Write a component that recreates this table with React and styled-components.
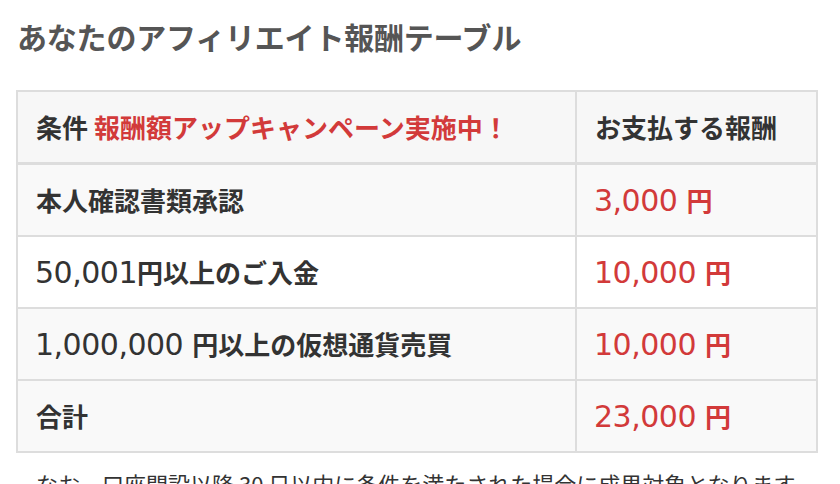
import React from 'react'
import styled, { createGlobalStyle } from 'styled-components'

const GlobalStyle = createGlobalStyle`
  html, body {
    margin: 0;
    background: #fff;
  }
  body {
    font-family: "Noto Sans CJK JP", "Noto Sans", sans-serif;
    color: #333;
  }
`

const Page = styled.main`
  padding: 15px 25px 0 16px;
  height: 484px;
  box-sizing: border-box;
  overflow: hidden;
`

const Title = styled.h2`
  margin: 0 0 33px 1px;
  font-size: 30px;
  line-height: 42px;
  font-weight: 700;
  color: #555;
  letter-spacing: -0.2px;
`

const Table = styled.table`
  width: 800px;
  border-collapse: collapse;
  border: 2px solid #ddd;
  table-layout: fixed;
`

const Row = styled.tr`
  background: ${props => (props.$striped ? '#f9f9f9' : '#fff')};
`

const HeadRow = styled.tr`
  background: #f7f7f7;
  border-bottom: 3px solid #ddd;
`

const Cell = styled.td`
  border: 2px solid #ddd;
  padding: 15px 16px 16px 18px;
  font-size: 26px;
  line-height: 39px;
  font-weight: 600;
  color: ${props => (props.$accent ? '#d23a3a' : '#333')};
  white-space: nowrap;
`

const HeadCell = styled(Cell).attrs({ as: 'th' })`
  text-align: left;
`

// latin digits in the reference are set noticeably larger and wider than the kana
const Num = styled.span`
  font-family: "DejaVu Sans", sans-serif;
  font-size: 30px;
  font-weight: 400;
  line-height: 1;
  letter-spacing: -0.5px;
  margin-left: -1px;
`

const Campaign = styled.span`
  color: #d23a3a;
  margin-left: 6px;
`

const Note = styled.p`
  margin: 14px 0 0 20px;
  font-size: 22px;
  line-height: 32px;
  color: #333;
  white-space: nowrap;
`

const withNumbers = text =>
  text.split(/([0-9][0-9,]*\s?)/).map((part, i) =>
    /^[0-9]/.test(part) ? <Num key={i}>{part}</Num> : part
  )

const rows = [
  { label: '本人確認書類承認', reward: '3,000 円', striped: true },
  { label: '50,001円以上のご入金', reward: '10,000 円', striped: false },
  { label: '1,000,000 円以上の仮想通貨売買', reward: '10,000 円', striped: true },
  { label: '合計', reward: '23,000 円', striped: true },
]

const App = () => {
  return (
    <Page>
      <GlobalStyle />
      <Title>あなたのアフィリエイト報酬テーブル</Title>
      <Table>
        <colgroup>
          <col style={{ width: 559 }} />
          <col style={{ width: 241 }} />
        </colgroup>
        <thead>
          <HeadRow>
            <HeadCell>
              条件<Campaign>報酬額アップキャンペーン実施中！</Campaign>
            </HeadCell>
            <HeadCell>お支払する報酬</HeadCell>
          </HeadRow>
        </thead>
        <tbody>
          {rows.map(row => (
            <Row key={row.label} $striped={row.striped}>
              <Cell>{withNumbers(row.label)}</Cell>
              <Cell $accent>{withNumbers(row.reward)}</Cell>
            </Row>
          ))}
        </tbody>
      </Table>
      <Note>なお、口座開設以降 30 日以内に条件を満たされた場合に成果対象となります</Note>
    </Page>
  )
}

export default App
